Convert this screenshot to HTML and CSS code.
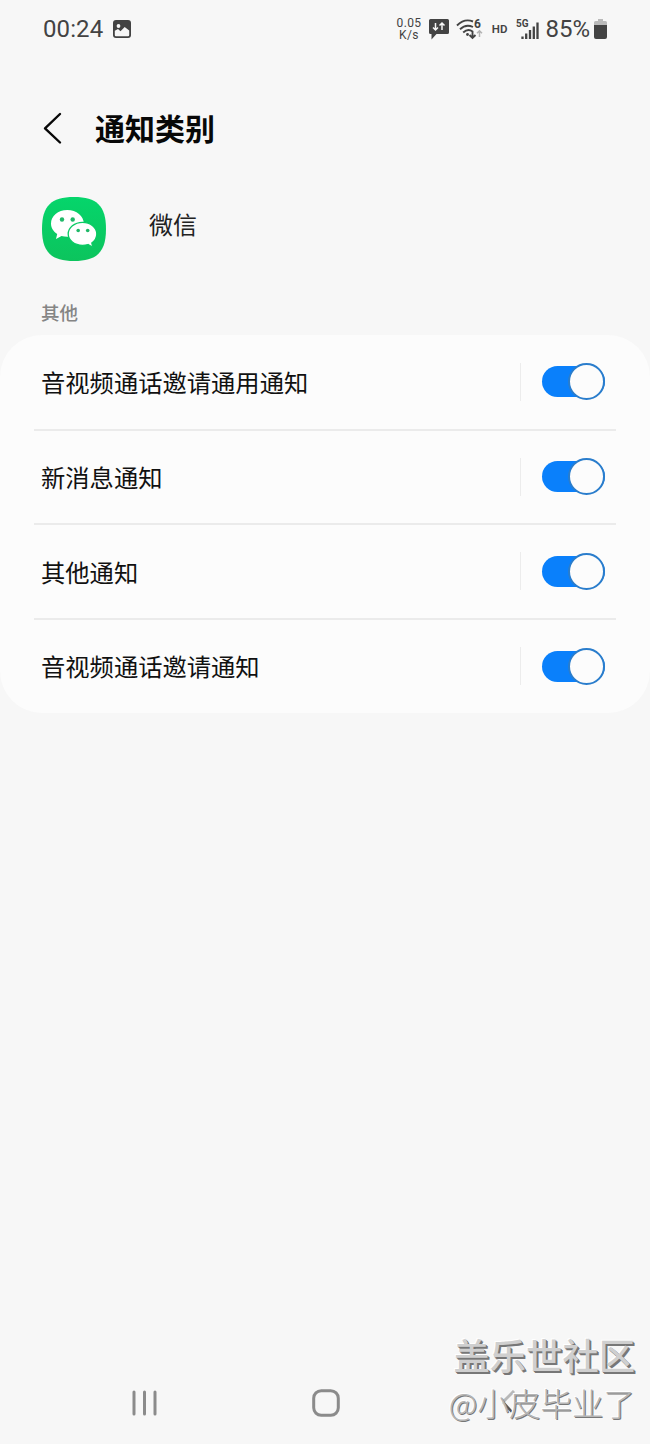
FILE: index.html
```html
<!DOCTYPE html>
<html lang="zh-CN">
<head>
<meta charset="utf-8">
<title>通知类别</title>
<link rel="stylesheet" href="styles.css">
</head>
<body>
<div class="screen">
  <div class="status">
    <span class="clock">00:24</span>
    <svg class="picture" width="18" height="18" viewBox="0 0 18 18"><rect width="18" height="18" rx="3" fill="#434343"/><circle cx="5.5" cy="6" r="1.9" fill="#f7f7f7"/><path d="M1.8 10.700 5 9l2.500 2.300 4.200-4.300 4.500 3.600V15q0 1.200-1.200 1.200H3q-1.200 0-1.200-1.200z" fill="#f7f7f7"/></svg>
    <span class="speed"><span>0.05</span><span>K/s</span></span>
    <svg class="bubble" width="20" height="21" viewBox="0 0 20 21"><path d="M1.5 0h17Q20 0 20 1.500v12Q20 15 18.500 15H7.500L2.500 20.500V15H1.500Q0 15 0 13.500v-12Q0 0 1.500 0z" fill="#434343"/><path d="M6.500 4v7M4 8.500 6.500 11 9 8.500M13 11V4M10.500 6.500 13 4l2.500 2.500" fill="none" stroke="#f7f7f7" stroke-width="1.500"/></svg>
    <svg class="wifi" width="27" height="22" viewBox="0 0 27 22"><g fill="none" stroke="#434343" stroke-width="1.900"><path d="M1 7.500Q8.500 0 17 3.500M4 11.200Q10 5.500 17 9M7.200 14.500Q12 10 16.500 13.500V20M13.500 17l3 3 3-3"/></g><circle cx="11.500" cy="16.500" r="1.400" fill="#434343"/><path d="M23.500 19v-6M21 15.300l2.500-2.500 2.500 2.500" stroke="#b3b3b3" stroke-width="1.500" fill="none"/><text x="18" y="10" class="wifi-six">6</text></svg>
    <span class="hd">HD</span>
    <svg class="signal" width="24" height="22" viewBox="0 0 24 22"><text x="0" y="9" class="five-g">5G</text><path d="M6.500 18.500V21M10.200 15.500V21M14 12v9M17.800 8.500V21M21.500 4.500V21" stroke="#434343" stroke-width="2.300"/></svg>
    <span class="percent">85%</span>
    <svg class="battery" width="13" height="20" viewBox="0 0 13 20"><path d="M4 0h5v2h2.500Q13 2 13 3.500V7H0V3.500Q0 2 1.500 2H4z" fill="#bababa"/><path d="M0 6h13v12q0 2-2 2H2q-2 0-2-2z" fill="#434343"/></svg>
  </div>
  <header class="header">
    <svg width="20" height="34" viewBox="0 0 20 34"><path d="M18 3 3 17.300 18 31.500" fill="none" stroke="#080808" stroke-width="2.400" stroke-linecap="round" stroke-linejoin="round"/></svg>
    <h1>通知类别</h1>
  </header>
  <div class="app">
    <svg width="64" height="64" viewBox="0 0 64 64">
      <defs><linearGradient id="green" x2="0" y2="1"><stop stop-color="#05d56b"/><stop offset="1" stop-color="#0cc45d"/></linearGradient></defs>
      <path d="M32 0C55 0 64 9 64 32S55 64 32 64 0 55 0 32 9 0 32 0z" fill="url(#green)"/>
      <path d="M25.300 13C16 13 9 19 9 26.500c0 4.500 2.500 8 6.200 10.500L14 42l5.500-3q3 .9 6.500.8c9 0 15.800-6 15.800-13.300S34.500 13 25.300 13z" fill="#fff"/>
      <path d="M40.500 25.300C48.500 25.300 54.800 30.500 54.800 37c0 3.700-2 6.800-5 9l1 4.200-4.800-2.700q-2.500.8-5.500.8c-8 0-14.300-5-14.300-11.300s6.300-11.700 14.300-11.700z" fill="#fff" stroke="#0acb64" stroke-width="1.300"/>
      <g fill="#1fb868"><circle cx="20" cy="22.500" r="2.200"/><circle cx="30.700" cy="22.500" r="2.200"/><circle cx="36.200" cy="33.500" r="1.800"/><circle cx="45.700" cy="33.500" r="1.800"/></g>
    </svg>
    <span class="app-name">微信</span>
  </div>
  <h2 class="section">其他</h2>
  <main class="card">
    <div class="row"><span class="label">音视频通话邀请通用通知</span><span class="control"><span class="toggle"></span></span></div>
    <div class="row"><span class="label">新消息通知</span><span class="control"><span class="toggle"></span></span></div>
    <div class="row"><span class="label">其他通知</span><span class="control"><span class="toggle"></span></span></div>
    <div class="row"><span class="label">音视频通话邀请通知</span><span class="control"><span class="toggle"></span></span></div>
  </main>
  <nav class="nav">
    <svg width="25" height="26" viewBox="0 0 25 26"><path d="M2 2v22M12.500 2v22M23 2v22" stroke="#8b8b8b" stroke-width="3" stroke-linecap="round"/></svg>
    <svg width="28" height="28" viewBox="0 0 28 28"><rect x="1.700" y="1.700" width="24.600" height="24.600" rx="7.500" fill="none" stroke="#8b8b8b" stroke-width="3"/></svg>
    <svg width="16" height="26" viewBox="0 0 16 26"><path d="M14 1 3 12" fill="none" stroke="#b8b8b8" stroke-width="3"/><path d="m3 12 9 10" stroke="#555" stroke-width="2.500"/></svg>
  </nav>
  <div class="watermark"><div class="community">盖乐世社区</div><div class="author">@小皮毕业了</div></div>
</div>
</body>
</html>
```
FILE: styles.css
```css
*, *::after { box-sizing: border-box; }
body { margin: 0; background: #f7f7f7; color: #111; font-family: "Noto Sans CJK SC", sans-serif; }
svg { display: block; flex: none; }
.screen { position: relative; display: flex; flex-direction: column; width: 650px; height: 1444px; overflow: hidden; }
.status { display: flex; align-items: center; height: 58px; padding: 0 43px; color: #434343; font-family: Roboto, sans-serif; }
.clock { width: 71px; font-size: 24px; letter-spacing: .1px; }
.speed { display: flex; flex-direction: column; align-items: center; width: 26px; margin-left: 265px; font-size: 12px; line-height: 12px; letter-spacing: .4px; }
.speed span { height: 12px; }
.bubble { margin-left: 7px; }
.wifi { margin-left: 7px; }
.wifi-six { font: bold 12px Roboto, sans-serif; fill: #434343; }
.hd { width: 24px; margin-left: 9px; font-size: 11.500px; font-weight: 600; }
.five-g { font: bold 10px Roboto, sans-serif; fill: #434343; }
.percent { width: 48px; margin-left: 6px; font-size: 24px; }
.battery { margin-left: 1px; }
.header { display: flex; align-items: center; gap: 33px; height: 140px; padding: 0 42px; }
h1 { margin: -3px 0 0; font-size: 30px; font-weight: 700; line-height: 40px; color: #080808; }
.app { display: flex; align-items: center; height: 64px; margin-top: -1px; padding-left: 42px; gap: 43px; }
.app-name { padding-bottom: 10px; font-size: 24px; line-height: 36px; color: #222; }
.section { height: 74px; margin: 0; padding: 37px 41px 0; font-size: 18.500px; font-weight: 500; line-height: 28px; color: #858585; }
.card { flex: none; height: 378px; padding: 0 34px; border-radius: 42px; background: #fcfcfc; }
.row { display: flex; justify-content: space-between; align-items: center; height: 94.670px; padding: 1px 11px 0 7px; border-bottom: 2px solid #ebebeb; }
.row:first-child { height: 95.500px; }
.row:last-child { height: 93.500px; border: 0; }
.row:last-child .label, .row:last-child .control { margin-bottom: 2px; }
.label { font-size: 24.300px; line-height: 36px; }
.control { display: flex; align-items: center; justify-content: flex-end; width: 85px; height: 38px; margin-bottom: 1px; border-left: 1px solid #ececec; }
.toggle { display: flex; align-items: center; justify-content: flex-end; width: 63px; height: 31px; border-radius: 16px; background: #0a80fb; }
.toggle::after { content: ""; flex: none; width: 37px; height: 37px; border: 2px solid #2a7dcc; border-radius: 50%; background: #fcfcfc; }
.nav { display: flex; justify-content: space-between; align-items: center; height: 82px; margin-top: auto; padding: 0 137px 0 132px; }
.nav svg:last-child { margin-right: -3px; margin-left: 6px; }
.watermark { position: absolute; right: 15px; bottom: 18px; display: flex; flex-direction: column; align-items: flex-end; white-space: nowrap; }
.community { font-size: 36.300px; font-weight: 500; line-height: 48px; color: #cfcfcf; text-shadow: 1px 1px #777, 2px 2px #777, -1px -1px #fff; }
.author { font-size: 31.500px; font-weight: 300; line-height: 48px; color: #b5b5b5; text-shadow: 1px 1px #777, -1px -1px #fff; }
```
